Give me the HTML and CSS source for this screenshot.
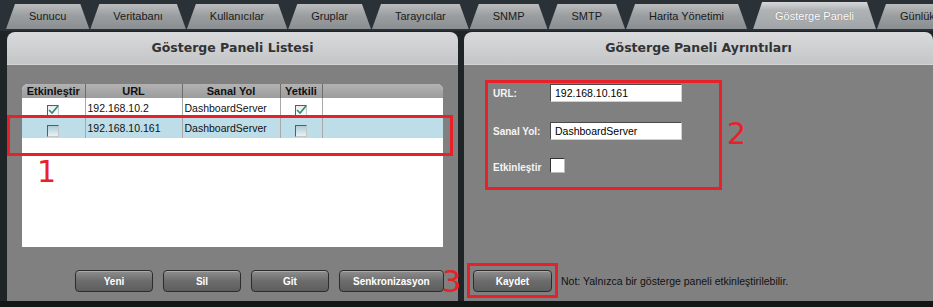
FILE: index.html
```html
<!DOCTYPE html>
<html>
<head>
<meta charset="utf-8">
<title>Gösterge Paneli</title>
<link rel="stylesheet" href="styles.css">
</head>
<body>
<nav class="tabs">
	<div class="tab">Sunucu</div>
	<div class="tab">Veritabanı</div>
	<div class="tab">Kullanıcılar</div>
	<div class="tab">Gruplar</div>
	<div class="tab">Tarayıcılar</div>
	<div class="tab">SNMP</div>
	<div class="tab">SMTP</div>
	<div class="tab">Harita Yönetimi</div>
	<div class="tab active">Gösterge Paneli</div>
	<div class="tab">Günlük</div>
</nav>

<div class="main">
	<section class="panel list">
		<h2 class="panel-head">Gösterge Paneli Listesi</h2>
		<div class="panel-body">
			<div class="grid">
				<table>
					<thead>
						<tr>
							<th class="c-en">Etkinleştir</th>
							<th class="c-url">URL</th>
							<th class="c-path">Sanal Yol</th>
							<th class="c-auth">Yetkili</th>
							<th class="c-rest"></th>
						</tr>
					</thead>
					<tbody>
						<tr>
							<td class="mid"><span class="chk on"><svg width="13" height="12" viewBox="0 0 13 12"><polyline points="2,6 5,9 11,2" fill="none" stroke="#2a8c7c" stroke-width="1.6"/></svg></span></td>
							<td>192.168.10.2</td>
							<td>DashboardServer</td>
							<td class="mid"><span class="chk on"><svg width="13" height="12" viewBox="0 0 13 12"><polyline points="2,6 5,9 11,2" fill="none" stroke="#2a8c7c" stroke-width="1.6"/></svg></span></td>
							<td class="last"></td>
						</tr>
						<tr class="sel">
							<td class="mid"><span class="chk"></span></td>
							<td>192.168.10.161</td>
							<td>DashboardServer</td>
							<td class="mid"><span class="chk"></span></td>
							<td class="last"></td>
						</tr>
					</tbody>
				</table>
			</div>
			<div class="actions">
				<button class="btn">Yeni</button>
				<button class="btn">Sil</button>
				<button class="btn">Git</button>
				<button class="btn">Senkronizasyon</button>
			</div>
		</div>
	</section>

	<section class="panel detail">
		<h2 class="panel-head">Gösterge Paneli Ayrıntıları</h2>
		<div class="panel-body">
			<form class="form">
				<label for="url">URL:</label>
				<input type="text" id="url" value="192.168.10.161">
				<label for="path">Sanal Yol:</label>
				<input type="text" id="path" value="DashboardServer">
				<label for="enable">Etkinleştir</label>
				<span class="box" id="enable"></span>
			</form>
			<div class="save-row">
				<span class="save-box"><button class="btn save">Kaydet</button></span>
				<span class="note">Not: Yalnızca bir gösterge paneli etkinleştirilebilir.</span>
			</div>
		</div>
	</section>
</div>
<div class="foot"></div>

<!-- annotations drawn over the screen -->
<div class="mark box1"></div>
<div class="num n1">1</div>
<div class="num n2">2</div>
<div class="num n3">3</div>
</body>
</html>
```

FILE: styles.css
```css
* {
	box-sizing: border-box;
}

body {
	margin: 0;
	width: 933px;
	height: 307px;
	overflow: hidden;
	position: relative;
	background: #2b3237;
	font-family: "Liberation Sans", Arial, sans-serif;
	font-size: 11px;
}

/* top tab strip */
.tabs {
	display: flex;
	align-items: flex-end;
	gap: 1px;
	height: 31px;
	padding: 0 0 2px 6px;
	overflow: hidden;
}

.tab {
	flex-shrink: 0;
	height: 25px;
	line-height: 25px;
	padding: 0 23px;
	white-space: nowrap;
	color: #1a1a1a;
	background: linear-gradient(#babcbd, #9c9fa1 45%, #8b8e90);
	clip-path: polygon(9px 0, calc(100% - 9px) 0, 100% 100%, 0 100%);
}

.tab.active {
	height: 27px;
	line-height: 28px;
	margin-left: 5px;
	padding: 0 22px;
	color: #fff;
	text-shadow: 0 0 1px rgba(0,0,0,.35);
	background: linear-gradient(#d6d8d9, #b0b3b5 30%, #a2a5a7);
}

/* panels */
.main {
	display: flex;
	gap: 6px;
	height: 270px;
	padding: 1px 0 0 7px;
	background: #1f2427;
}

.panel {
	display: flex;
	flex-direction: column;
}

.list {
	width: 451px;
}

.detail {
	flex: 1;
}

.panel-head {
	flex-shrink: 0;
	margin: 0;
	height: 33px;
	font: bold 12.5px/32px "DejaVu Sans", Verdana, sans-serif;
	text-align: center;
	color: #333;
	background: linear-gradient(#d8dadb, #c3c5c6);
	border-bottom: 1px solid #d4d4d4;
	border-radius: 8px 8px 0 0;
}

.panel-body {
	flex: 1;
	display: flex;
	flex-direction: column;
	background: #808080;
}

/* list grid */
.grid {
	margin: 19px 0 0 15px;
	width: 421px;
	height: 163px;
	background: #fff;
	border-radius: 6px 6px 0 0;
	overflow: hidden;
}

table {
	width: 100%;
	border-collapse: collapse;
	table-layout: fixed;
}

th {
	height: 14px;
	padding: 0;
	line-height: 14px;
	font-weight: bold;
	font-size: 11px;
	color: #111;
	text-align: center;
	background: linear-gradient(#b2b2b2, #9c9c9c);
	border-right: 1px solid #6e6e6e;
}

th.c-rest {
	border-right: 0;
}

.c-en { width: 63px; }
.c-url { width: 97px; }
.c-path { width: 98px; }
.c-auth { width: 42px; }

td {
	height: 20px;
	padding: 0 2px;
	font-size: 10.5px;
	color: #111;
	white-space: nowrap;
	border-right: 1px solid #a9a9a9;
}

td.last {
	border-right: 0;
}

td.mid {
	text-align: center;
	padding-top: 4px;
}

tr.sel td {
	background: #bddde8;
}

.chk {
	display: inline-block;
	position: relative;
	width: 12px;
	height: 12px;
	vertical-align: middle;
	border: 1px solid;
	border-color: #5c5c5c #c6c6c6 #c6c6c6 #5c5c5c;
	background: linear-gradient(rgba(0,0,0,.08), rgba(255,255,255,.6));
}

.chk svg {
	position: absolute;
	left: -1px;
	top: -2px;
}

/* buttons */
.actions {
	display: flex;
	gap: 10px;
	margin: 23px 0 0 68px;
}

.btn {
	height: 22px;
	min-width: 78px;
	padding: 0 13px;
	border: 1px solid #2c2c2c;
	border-radius: 4px;
	color: #fff;
	font: bold 10px "Liberation Sans", Arial, sans-serif;
	background: linear-gradient(#8e8e8e, #6c6c6c 50%, #5e5e5e);
	box-shadow: inset 0 1px 0 rgba(255,255,255,.25);
}

.btn.save {
	width: 79px;
}

/* detail form */
.form {
	display: grid;
	grid-template-columns: 57px 132px;
	grid-template-rows: 18px 18px 15px;
	row-gap: 20px;
	align-items: center;
	margin: 15px 0 0 21px;
	width: 237px;
	height: 110px;
	padding: 1px 0 0 5px;
	border: 3px solid #e8202a;
}

.form label {
	font-weight: bold;
	font-size: 10px;
	color: #f4f4f4;
}

.form input {
	height: 18px;
	width: 132px;
	padding: 0 4px;
	font: 10.5px "Liberation Sans", Arial, sans-serif;
	color: #000;
	background: #fff;
	border: 1px solid;
	border-color: #4a4a4a #d0d0d0 #d0d0d0 #4a4a4a;
	outline: none;
}

.box {
	width: 15px;
	height: 15px;
	margin-top: -4px;
	background: #fff;
	border: 1px solid;
	border-color: #333 #bbb #bbb #333;
}

.save-row {
	display: flex;
	align-items: center;
	margin-top: auto;
	padding: 0 0 3px 3px;
}

.save-box {
	display: flex;
	padding: 4px 3px 3px;
	border: 3px solid #e8202a;
}

.note {
	margin-left: 3px;
	font-size: 10.5px;
	color: #111;
}

.foot {
	height: 6px;
	background: #131517;
}

/* red annotations */
.mark {
	position: absolute;
	border: 3px solid #e8202a;
}

.box1 {
	left: 7px;
	top: 115px;
	width: 446px;
	height: 41px;
}

.num {
	position: absolute;
	font: 30px/1 "DejaVu Sans", sans-serif;
	color: #e8202a;
}

.n1 {
	left: 37px;
	top: 157px;
}

.n2 {
	left: 727px;
	top: 119px;
}

.n3 {
	left: 442px;
	top: 267px;
}
```
